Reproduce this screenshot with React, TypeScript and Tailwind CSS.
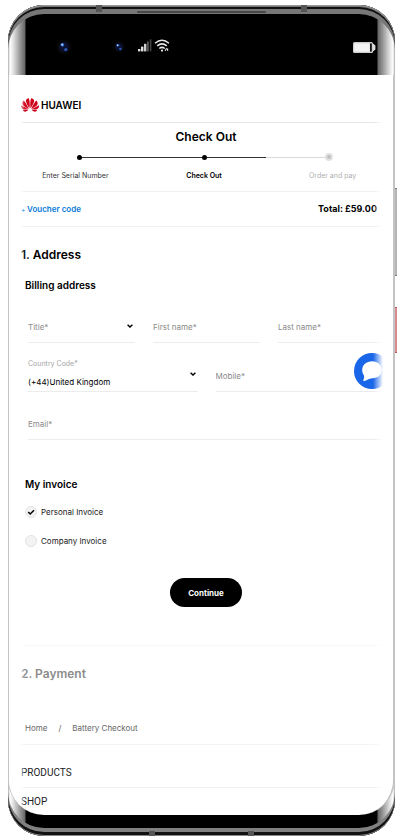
import React, { useState } from "react";
import clsx from "clsx";
import { SiHuawei } from "react-icons/si";

const steps = [
  { label: "Enter Serial Number", state: "done" },
  { label: "Check Out", state: "current" },
  { label: "Order and pay", state: "todo" },
];

const invoiceTypes = ["Personal Invoice", "Company Invoice"];

const Camera: React.FC<{ className: string }> = ({ className }) => (
  <svg viewBox="0 0 16 16" className={className} aria-hidden="true">
    <circle cx="8" cy="8" r="7.5" fill="#070708" />
    <circle cx="8" cy="8" r="5" fill="#0b1030" />
    <circle cx="6.4" cy="5.8" r="1.9" fill="#2f63c4" />
    <circle cx="6.2" cy="5.6" r="0.9" fill="#d5e8ff" />
    <circle cx="9.8" cy="10.6" r="1.6" fill="#2c56b4" />
  </svg>
);

const Chevron: React.FC<{ className: string }> = ({ className }) => (
  <svg
    viewBox="0 0 6 4"
    className={clsx("pointer-events-none absolute h-1 w-1.5", className)}
    fill="none"
    stroke="#000"
    strokeWidth="1.5"
    aria-hidden="true"
  >
    <path d="M0.6 0.7 3 3 5.4 0.7" />
  </svg>
);

const StatusBar: React.FC = () => (
  <header className="relative flex h-[70px] items-center pt-[14px] pr-[19px] pl-12">
    <span className="absolute top-0 left-[88px] h-[7px] w-[6px] bg-[#555]" />
    <span className="absolute top-0 right-[88px] h-[7px] w-[6px] bg-[#555]" />
    <span className="absolute top-[6px] left-1/3 h-[2px] w-1/3 rounded bg-[#484848]" />
    <Camera className="h-4 w-4" />
    <Camera className="ml-[41px] h-3 w-3" />
    <svg viewBox="0 0 14 13" className="ml-[13px] -mt-1 h-[13px] w-[14px]">
      <rect x="0" y="10" width="2.4" height="2.4" fill="#ddd" />
      <rect x="3" y="7.6" width="2.4" height="4.8" fill="#ddd" />
      <rect x="6" y="4.8" width="2.4" height="7.6" fill="#ccc" />
      <rect x="9" y="2.4" width="1.8" height="10" fill="#555" />
      <rect x="11.8" y="0.4" width="1.6" height="12" fill="#444" />
    </svg>
    <svg
      viewBox="0 0 16 13"
      className="ml-[2px] -mt-1 h-[13px] w-4"
      fill="none"
      stroke="#e8e8e8"
      strokeWidth="1.5"
    >
      <path d="M1 4.2Q8 -1.8 15 4.2" />
      <path d="M3.2 6.9Q8 2.8 12.8 6.9" />
      <path d="M5.3 9.5Q8 7.2 10.7 9.5" />
      <circle cx="8" cy="11.6" r="1.1" fill="#e8e8e8" stroke="none" />
      <path d="M11.2 11.8 12.6 9.2M13.6 11.8V9.6" strokeWidth="1.2" />
    </svg>
    <svg viewBox="0 0 23 11" className="ml-auto h-[11px] w-[23px]">
      <rect x="0" y="0" width="20" height="11" rx="1.5" fill="#cfcfcf" />
      <rect x="1.2" y="1.4" width="15.5" height="8.2" fill="#f4f4f4" />
      <rect x="17" y="1.4" width="1.8" height="8.2" fill="#111" />
      <path d="M20 1.5 22.4 3.4V7.6L20 9.5Z" fill="#ddd" />
    </svg>
  </header>
);

const Stepper: React.FC = () => (
  <>
    <div className="mt-1 -ml-1 grid grid-cols-3" aria-hidden="true">
      {steps.map((step, i) => (
        <div key={step.label} className="flex h-3 items-center">
          <span
            className={clsx(
              "h-px flex-1",
              i > 0 && (step.state === "todo" ? "bg-[#d9d9d9]" : "bg-[#333]")
            )}
          />
          <span
            className={clsx(
              "rounded-full",
              step.state === "todo"
                ? "h-2 w-2 border-2 border-[#e2e2e2] bg-[#c0c0c0]"
                : "h-[5px] w-[5px] bg-black"
            )}
          />
          <span
            className={clsx("h-px flex-1", i < steps.length - 1 && "bg-[#333]")}
          />
        </div>
      ))}
    </div>
    <ol className="mt-[5px] -mr-[6px] -ml-[10px] grid grid-cols-3 text-center text-[7px] leading-4">
      {steps.map((step) => (
        <li
          key={step.label}
          className={clsx(
            step.state === "done" && "text-[#333]",
            step.state === "current" && "font-semibold text-black",
            step.state === "todo" && "text-[#b0b0b0]"
          )}
        >
          {step.label}
        </li>
      ))}
    </ol>
  </>
);

const TextField: React.FC<{ label: string; className: string }> = ({
  label,
  className,
}) => (
  <input
    type="text"
    aria-label={label}
    placeholder={label}
    className={clsx(
      "h-6 w-full min-w-0 self-end border-b border-[#ececec] pb-[7px] text-[8px] leading-4 text-black outline-none placeholder:text-[#8a8a8a]",
      className
    )}
  />
);

const AddressForm: React.FC = () => (
  <div className="mt-6 grid grid-cols-6 gap-x-[18px] pr-[6px] pl-[7px]">
    <div className="relative col-span-2">
      <select
        aria-label="Title"
        defaultValue=""
        className="block h-6 w-full appearance-none border-b border-[#ececec] pb-[7px] text-[8px] leading-4 text-[#8a8a8a] outline-none"
      >
        <option value="">Title*</option>
        <option>Mr</option>
        <option>Mrs</option>
        <option>Ms</option>
      </select>
      <Chevron className="top-[5px] right-[2px]" />
    </div>
    <TextField label="First name*" className="col-span-2" />
    <TextField label="Last name*" className="col-span-2" />

    <div className="relative col-span-3 pt-[13px]">
      <label
        htmlFor="country"
        className="block text-[7px] leading-4 text-[#a5a5a5]"
      >
        Country Code*
      </label>
      <select
        id="country"
        className="block h-5 w-full appearance-none border-b border-[#ececec] text-[8px] leading-4 text-black outline-none"
      >
        <option>(+44)United Kingdom</option>
      </select>
      <Chevron className="top-[29px] right-[2px]" />
    </div>
    <TextField label="Mobile*" className="col-span-3" />

    <TextField label="Email*" className="col-span-6 mt-6" />
  </div>
);

const Invoice: React.FC = () => {
  const [invoice, setInvoice] = useState(invoiceTypes[0]);

  return (
    <fieldset className="mt-[34px] pl-1">
      <legend className="text-[10px] leading-5 font-semibold">
        My invoice
      </legend>
      <div className="mt-[10px] flex flex-col items-start gap-[13px]">
        {invoiceTypes.map((type) => (
          <label
            key={type}
            className="flex items-center gap-1 text-[8px] leading-4 text-[#222]"
          >
            <span className="relative h-3 w-3">
              <input
                type="radio"
                name="invoice"
                checked={invoice === type}
                onChange={() => setInvoice(type)}
                className="block h-3 w-3 appearance-none rounded-full border border-[#e2e2e2] bg-[#f3f3f3]"
              />
              {invoice === type && (
                <svg
                  viewBox="0 0 12 12"
                  className="pointer-events-none absolute inset-0"
                  fill="none"
                  stroke="#000"
                  strokeWidth="1.5"
                >
                  <path d="M3.2 6 5.2 8 9 4.2" />
                </svg>
              )}
            </span>
            {type}
          </label>
        ))}
      </div>
    </fieldset>
  );
};

const ChatButton: React.FC = () => (
  <button
    type="button"
    aria-label="Chat"
    className="absolute top-[278px] right-[3px] h-9 w-9 rounded-full bg-[#1a66e8]"
  >
    <svg viewBox="0 0 36 36" fill="#fff">
      <path d="M18.2 8.2C23.800 8.2 27.600 11.800 27.600 17S23.800 25 18.500 25.200C16.500 25.400 15 26 13.400 26.800 12 27.500 10.800 28 9.800 28.100 9.400 28.100 9.200 27.800 9.300 27.400 9.900 25.700 10.600 24 9.800 22.300 8.800 20.600 8.200 19 8.200 17 8.200 11.800 12.400 8.200 18.200 8.200Z" />
    </svg>
  </button>
);

const App: React.FC = () => {
  return (
    <div className="bg-white pt-[5px] pb-1 font-['Inter','Liberation_Sans',sans-serif] text-black">
      <div className="relative mr-[10px] ml-2">
        <span className="absolute top-[183px] -right-[2px] h-[88px] w-1 border-y border-l border-[#777] bg-[#b5b5b5]" />
        <span className="absolute top-[302px] -right-[2px] h-[46px] w-1 border-y border-l border-[#b85c60] bg-[#d98c90]" />

        {/* phone body: side gradient, with the metal rim as inset shadows */}
        <div className="relative overflow-hidden rounded-[36px] bg-[linear-gradient(to_right,#aaa_0px,#fff_2px,#e4e4e4_5px,#999_12px,#666_17px,#000_18px,#000_calc(100%-18px),#666_calc(100%-17px),#999_calc(100%-12px),#e4e4e4_calc(100%-5px),#fff_calc(100%-2px),#aaa_100%)] pb-[21px] shadow-[inset_0_1px_0_#999,inset_0_2px_0_#777,inset_0_4px_0_#111,inset_0_9px_0_#777,inset_0_-1px_0_#888,inset_0_-4px_0_#111,inset_0_-8px_0_#808080]">
          <StatusBar />

          <main className="relative overflow-hidden rounded-b-[36px] border-r-2 border-l border-[#c4c4c4] bg-white pr-[2px] pl-3">
            <div className="flex h-12 items-center gap-[2px] border-b border-[#e6e6e6] pt-3">
              <SiHuawei className="h-[18px] w-[18px] text-[#d0021b]" />
              <span className="text-[10px] leading-4 font-semibold">HUAWEI</span>
            </div>

            <h1 className="pt-1 text-center text-[12px] leading-5 font-semibold">
              Check Out
            </h1>
            <Stepper />

            <div className="mt-[7px] flex h-9 items-center justify-between border-y border-[#f1f1f1] pr-[14px]">
              <a href="#voucher" className="text-[8px] font-semibold text-[#0a7ad8]">
                <span className="text-[6px]">+</span> Voucher code
              </a>
              <span className="text-[9px] font-bold">Total: £59.00</span>
            </div>

            <section>
              <h2 className="pt-4 text-[12px] leading-6 font-semibold">
                1. Address
              </h2>
              <h3 className="mt-2 pl-1 text-[10px] leading-5 font-semibold">
                Billing address
              </h3>
              <AddressForm />
              <Invoice />
              <div className="mt-[29px] flex justify-center border-b border-[#f8f8f8] pb-[38px]">
                <button
                  type="button"
                  className="h-[29px] w-[72px] rounded-full bg-black text-[8px] font-bold text-white"
                >
                  Continue
                </button>
              </div>
            </section>

            <h2 className="mt-4 text-[12px] leading-6 font-semibold text-[#8c8c8c]">
              2. Payment
            </h2>

            <nav className="mt-[34px] flex gap-[11px] border-b border-[#f3f3f3] pb-2 pl-1 text-[8px] leading-4 text-[#666]">
              <a href="#home">Home</a>
              <span>/</span>
              <a href="#battery">Battery Checkout</a>
            </nav>

            <nav className="pb-[5px] font-['Roboto','Liberation_Sans',sans-serif] text-[10px] leading-4 text-[#222]">
              <a
                href="#products"
                className="block border-b border-[#f1f1f1] pt-5 pb-[6px]"
              >
                PRODUCTS
              </a>
              <a href="#shop" className="block pt-[6px]">
                SHOP
              </a>
            </nav>

            <ChatButton />

            {/* curved glass fades both edges */}
            <div className="pointer-events-none absolute inset-y-0 left-0 w-4 bg-linear-to-r from-white from-60% to-transparent" />
            <div className="pointer-events-none absolute inset-y-0 right-0 w-5 bg-linear-to-l from-white from-50% to-transparent" />
          </main>

          <span className="absolute bottom-0 left-[141px] h-[5px] w-[6px] bg-[#555]" />
          <span className="absolute right-[141px] bottom-0 h-[5px] w-[6px] bg-[#555]" />
        </div>
      </div>
    </div>
  );
};

export default App;
